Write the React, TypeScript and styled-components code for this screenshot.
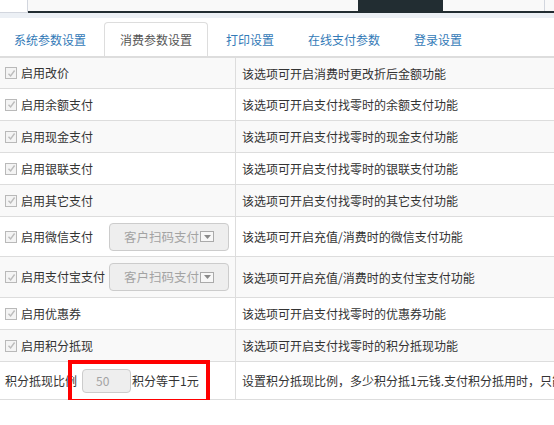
import React from 'react';
import styled, { createGlobalStyle } from 'styled-components';

const GlobalStyle = createGlobalStyle`
  html, body {
    margin: 0;
    padding: 0;
    overflow: hidden;
    background: #fff;
  }
  body {
    font-family: "Noto Sans CJK SC", "Noto Sans", sans-serif;
    font-size: 12px;
    color: #333;
  }
`;

const Page = styled.div`
  width: 820px;
`;

const TopStrip = styled.div`
  display: flex;
  height: 13px;
`;

const StripHome = styled.div`
  width: 28px;
  box-sizing: border-box;
  background: #fff;
  border-right: 1px solid #d2d6de;
  border-bottom: 1px solid #d2d6de;
`;

const StripTabs = styled.div`
  flex: 1;
  display: flex;
  box-sizing: border-box;
  background: #f9f9f9;
  border-bottom: 2px solid #222d32;
`;

const OuterTab = styled.div<{ $w: number; $active?: boolean; $edge?: boolean }>`
  width: ${(p) => p.$w}px;
  background: ${(p) => (p.$active ? '#222d32' : 'transparent')};
  border-right: ${(p) => (p.$edge ? '1px solid #d2d6de' : '0')};
`;

const Band = styled.div`
  height: 5px;
  background: #ecf0f5;
`;

const TabBar = styled.ul`
  display: flex;
  list-style: none;
  margin: 4px 0 0 -2px;
  padding: 0;
`;

const Tab = styled.li<{ $active?: boolean }>`
  padding: 10px 15px;
  line-height: 13px;
  margin-right: 2px;
  border: 1px solid ${(p) => (p.$active ? '#ddd' : 'transparent')};
  border-bottom: 0;
  border-radius: 4px 4px 0 0;
  background: #fff;
  color: ${(p) => (p.$active ? '#555' : '#337ab7')};
  white-space: nowrap;
`;

const Table = styled.div`
  border-top: 2px solid #ddd;
`;

const Row = styled.div<{ $h: number; $striped: boolean }>`
  position: relative;
  display: grid;
  grid-template-columns: 236px 1fr;
  height: ${(p) => p.$h}px;
  box-sizing: border-box;
  border-bottom: 1px solid #ddd;
  background: ${(p) => (p.$striped ? '#f9f9f9' : '#fff')};
`;

const LabelCell = styled.div`
  display: flex;
  align-items: center;
  padding: 0 5px;
  border-right: 1px solid #ddd;
  box-sizing: border-box;
  white-space: nowrap;
`;

const DescCell = styled.div`
  display: flex;
  align-items: center;
  padding-left: 6px;
  white-space: nowrap;
`;

const CheckLabel = styled.label<{ $wide?: boolean }>`
  display: flex;
  align-items: center;
  gap: 4px;
  min-width: ${(p) => (p.$wide ? '100px' : 'auto')};
  line-height: 14px;
`;

const Box = styled.span`
  display: inline-flex;
  align-items: center;
  justify-content: center;
  width: 12px;
  height: 12px;
  box-sizing: border-box;
  border: 1px solid #b9b9b9;
  background: #f4f4f4;
`;

const Select = styled.div`
  display: flex;
  align-items: center;
  width: 120px;
  height: 28px;
  margin-left: 4px;
  padding-left: 14px;
  box-sizing: border-box;
  border: 1px solid #ccc;
  border-radius: 4px;
  background: #eee;
  color: #a3a3a3;
  font-size: 12.5px;
  line-height: 14px;
`;

const Arrow = styled.span`
  display: inline-flex;
  align-items: center;
  justify-content: center;
  width: 14px;
  height: 11px;
  margin-left: 1px;
  box-sizing: border-box;
  border: 1px solid #aaa;
  background: #f7f7f7;
`;

const RatioInput = styled.div`
  width: 49px;
  height: 24px;
  margin: 0 1px 0 5px;
  padding-left: 13px;
  box-sizing: border-box;
  display: flex;
  align-items: center;
  border: 1px solid #ccc;
  border-radius: 4px;
  background: #eee;
  color: #a3a3a3;
  font-size: 12px;
`;

const Mark = styled.div`
  position: absolute;
  left: 68px;
  top: -2px;
  width: 142px;
  height: 43px;
  box-sizing: border-box;
  border: 4px solid #f00;
  pointer-events: none;
`;

const Check = () => (
  <Box>
    <svg width="9" height="9" viewBox="0 0 9 9">
      <path d="M1.5 4.8 L3.6 7 L7.6 1.5" fill="none" stroke="#bcbcbc" strokeWidth="1.4" />
    </svg>
  </Box>
);

const PaySelect = () => (
  <Select>
    客户扫码支付
    <Arrow>
      <svg width="7" height="4" viewBox="0 0 7 4">
        <path d="M0 0 H7 L3.5 4 Z" fill="#8a8a8a" />
      </svg>
    </Arrow>
  </Select>
);

type Option = { label: string; desc: string; h: number; select?: boolean };

const options: Option[] = [
  { label: '启用改价', desc: '该选项可开启消费时更改折后金额功能', h: 31 },
  { label: '启用余额支付', desc: '该选项可开启支付找零时的余额支付功能', h: 32 },
  { label: '启用现金支付', desc: '该选项可开启支付找零时的现金支付功能', h: 32 },
  { label: '启用银联支付', desc: '该选项可开启支付找零时的银联支付功能', h: 32 },
  { label: '启用其它支付', desc: '该选项可开启支付找零时的其它支付功能', h: 32 },
  { label: '启用微信支付', desc: '该选项可开启充值/消费时的微信支付功能', h: 40, select: true },
  { label: '启用支付宝支付', desc: '该选项可开启充值/消费时的支付宝支付功能', h: 41, select: true },
  { label: '启用优惠券', desc: '该选项可开启支付找零时的优惠券功能', h: 32 },
  { label: '启用积分抵现', desc: '该选项可开启支付找零时的积分抵现功能', h: 32 },
];

const tabs = ['系统参数设置', '消费参数设置', '打印设置', '在线支付参数', '登录设置'];

export default function App() {
  return (
    <Page>
      <GlobalStyle />
      <TopStrip>
        <StripHome />
        <StripTabs>
          <OuterTab $w={330} />
          <OuterTab $w={85} $active />
          <OuterTab $w={101} $edge />
        </StripTabs>
      </TopStrip>
      <Band />
      <TabBar>
        {tabs.map((t, i) => (
          <Tab key={t} $active={i === 1}>
            {t}
          </Tab>
        ))}
      </TabBar>
      <Table>
        {options.map((o, i) => (
          <Row key={o.label} $h={o.h} $striped={i % 2 === 0}>
            <LabelCell>
              <CheckLabel $wide={o.select}>
                <Check />
                {o.label}
              </CheckLabel>
              {o.select && <PaySelect />}
            </LabelCell>
            <DescCell>{o.desc}</DescCell>
          </Row>
        ))}
        <Row $h={38} $striped={false}>
          <LabelCell>
            积分抵现比例
            <RatioInput>50</RatioInput>
            积分等于1元
          </LabelCell>
          <DescCell>设置积分抵现比例，多少积分抵1元钱.支付积分抵用时，只能抵用整数金额</DescCell>
          <Mark />
        </Row>
      </Table>
    </Page>
  );
}
